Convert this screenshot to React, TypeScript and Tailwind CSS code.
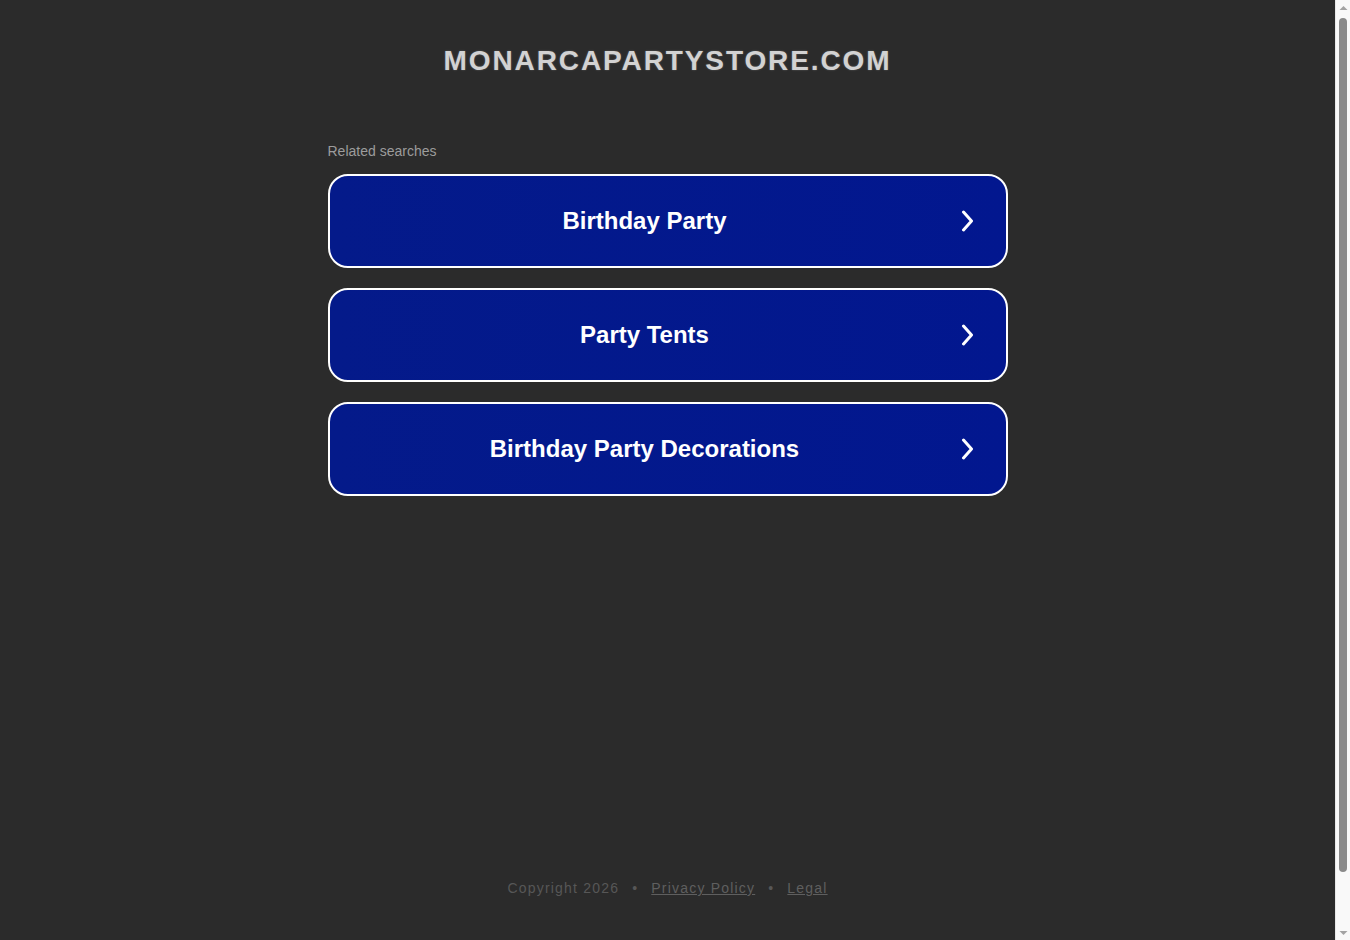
import React from "react";

const items = ["Birthday Party", "Party Tents", "Birthday Party Decorations"];

function Chevron() {
  return (
    <svg width="14" height="22" viewBox="0 0 14 22" fill="none" aria-hidden="true">
      <polyline
        points="2.5,2 10.5,11 2.5,20"
        stroke="white"
        strokeWidth="3"
        strokeLinecap="round"
        strokeLinejoin="round"
      />
    </svg>
  );
}

function ScrollArrow({ up }: { up?: boolean }) {
  return (
    <div className="h-[15px] flex items-center justify-center">
      <svg width="9" height="6" viewBox="0 0 9 6" aria-hidden="true">
        <polygon points={up ? "0.5,5 4.5,1 8.5,5" : "0.5,1 4.5,5 8.5,1"} fill="#a3a3a3" />
      </svg>
    </div>
  );
}

export default function App() {
  return (
    <div
      className="h-[940px] w-full flex overflow-hidden bg-[#2b2b2b]"
      style={{ fontFamily: '"Liberation Sans", Arial, sans-serif' }}
    >
      <div className="flex-1 min-w-0 h-full overflow-hidden">
        <div className="min-h-[1000px] w-full flex flex-col items-center">
          <h1 className="pt-[45px] text-[28px] leading-[32px] font-bold tracking-[1.9px] text-[#d2d2d2] [text-shadow:0_0_2px_rgba(255,255,255,0.25)]">
            MONARCAPARTYSTORE.COM
          </h1>

          <div className="mt-[66px] w-[680px] flex flex-col">
            <div className="text-[14px] leading-[16px] text-[#9c9c9c]">Related searches</div>
            <div className="mt-[15px] flex flex-col gap-[20px]">
              {items.map((t) => (
                <a
                  key={t}
                  href="#"
                  className="h-[94px] rounded-[20px] border-2 border-white bg-[#03188d] bg-gradient-to-r from-[#041a8a] to-[#02178f] flex items-center"
                >
                  <span className="flex-1 text-center text-[24px] leading-[28px] font-bold text-white">
                    {t}
                  </span>
                  <span className="ml-[1px] mr-[31px] flex items-center">
                    <Chevron />
                  </span>
                </a>
              ))}
            </div>
          </div>

          <footer className="mt-auto pb-[104px] flex items-center text-[14px] leading-[16px] tracking-[1.2px] text-[#575757]">
            <span>Copyright 2026</span>
            <span className="mx-[13px]">•</span>
            <a href="#" className="underline text-[#5f5f5f]">Privacy Policy</a>
            <span className="mx-[13px]">•</span>
            <a href="#" className="underline text-[#5f5f5f]">Legal</a>
          </footer>
        </div>
      </div>

      <div className="w-[15px] h-full shrink-0 bg-[#f9f9f9] border-l border-[#e8e8e8] flex flex-col">
        <ScrollArrow up />
        <div className="flex-1 flex flex-col px-[3px] pt-[3px] pb-[53px]">
          <div className="flex-1 rounded-full bg-[#8a8a8a]" />
        </div>
        <ScrollArrow />
      </div>
    </div>
  );
}
